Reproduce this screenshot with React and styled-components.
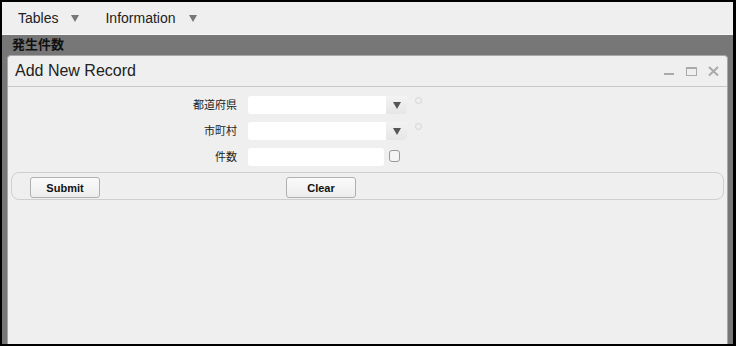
import React from "react";
import styled, { createGlobalStyle } from "styled-components";

const GlobalStyle = createGlobalStyle`
  html, body {
    margin: 0;
    padding: 0;
    background: #000;
  }
  * {
    box-sizing: border-box;
  }
`;

const Frame = styled.div`
  width: 736px;
  height: 346px;
  border: 2px solid #000;
  border-right-width: 3px;
  display: flex;
  flex-direction: column;
  background: #777;
  font-family: "Liberation Sans", "Noto Sans CJK JP", sans-serif;
  overflow: hidden;
`;

const MenuBar = styled.div`
  height: 33px;
  flex: none;
  display: flex;
  align-items: center;
  padding-left: 16px;
  gap: 26px;
  background: #efefef;
  border-bottom: 1px solid #f8f8f8;
`;

const MenuItem = styled.div`
  display: flex;
  align-items: center;
  gap: 13px;
  font-size: 14px;
  color: #222;
`;

const MenuArrow = styled.span`
  width: 0;
  height: 0;
  border-left: 4px solid transparent;
  border-right: 4px solid transparent;
  border-top: 7px solid #777;
  margin-top: 1px;
`;

const Backdrop = styled.div`
  flex: 1;
  display: flex;
  flex-direction: column;
  background: #777;
  min-height: 0;
`;

const SectionTitle = styled.div`
  height: 20px;
  flex: none;
  padding-left: 10px;
  font-size: 13px;
  font-weight: bold;
  line-height: 20px;
  color: #111;
`;

const Dialog = styled.div`
  flex: 1;
  margin: 0 5px;
  display: flex;
  flex-direction: column;
  background: #efefef;
  border: 1px solid #a8a8a8;
  border-bottom: none;
  border-radius: 4px 4px 0 0;
`;

const TitleBar = styled.div`
  height: 31px;
  flex: none;
  display: flex;
  align-items: center;
  padding: 0 8px 0 7px;
  border-bottom: 1px solid #c8c8c8;
`;

const Title = styled.div`
  flex: 1;
  font-size: 16px;
  color: #222;
`;

const Controls = styled.div`
  display: flex;
  align-items: center;
  gap: 11px;
`;

const ControlIcon = styled.svg`
  display: block;
  width: 11px;
  height: 11px;
`;

const Form = styled.div`
  display: grid;
  grid-template-columns: 229px auto;
  column-gap: 11px;
  row-gap: 8px;
  padding-top: 9px;
  align-items: start;
`;

const Label = styled.label`
  text-align: right;
  font-size: 11px;
  line-height: 18px;
  color: #222;
`;

const Field = styled.div`
  display: flex;
  align-items: flex-start;
`;

const SelectBox = styled.div`
  width: 159px;
  height: 18px;
  display: flex;
  background: #fff;
  border-radius: 3px;
  overflow: hidden;
`;

const SelectValue = styled.div`
  flex: 1;
`;

const SelectButton = styled.div`
  width: 21px;
  display: flex;
  align-items: center;
  justify-content: center;
  background: linear-gradient(#f3f3f3, #e6e6e6);
  &::after {
    content: "";
    border-left: 4px solid transparent;
    border-right: 4px solid transparent;
    border-top: 7px solid #555;
  }
`;

const Hint = styled.span`
  width: 7px;
  height: 7px;
  margin: 1px 0 0 8px;
  border: 1px solid #d4d4d4;
  border-radius: 50%;
`;

const TextInput = styled.input`
  width: 136px;
  height: 18px;
  border: none;
  border-radius: 3px;
  background: #fff;
  padding: 0 3px;
  font-size: 11px;
  outline: none;
`;

const CheckBox = styled.span`
  width: 11px;
  height: 12px;
  margin: 2px 0 0 5px;
  border: 1px solid #999;
  border-radius: 3px;
  background: #f4f4f4;
`;

const ButtonBar = styled.div`
  margin: 6px 3px 0;
  height: 28px;
  display: flex;
  align-items: flex-start;
  padding: 4px 0 0 18px;
  border: 1px solid #cfcfcf;
  border-radius: 8px;
`;

const Button = styled.button`
  width: 70px;
  height: 21px;
  margin-right: ${(p) => p.$gap || 0}px;
  padding: 0;
  border: 1px solid #b0b0b0;
  border-radius: 3px;
  background: linear-gradient(#fafafa, #ededed);
  font-family: "Liberation Sans", sans-serif;
  font-size: 11px;
  font-weight: bold;
  color: #111;
`;

const Select = () => (
  <SelectBox>
    <SelectValue />
    <SelectButton />
  </SelectBox>
);

export default function App() {
  return (
    <>
      <GlobalStyle />
      <Frame>
        <MenuBar>
          <MenuItem>
            Tables <MenuArrow />
          </MenuItem>
          <MenuItem>
            Information <MenuArrow />
          </MenuItem>
        </MenuBar>
        <Backdrop>
          <SectionTitle>発生件数</SectionTitle>
          <Dialog>
            <TitleBar>
              <Title>Add New Record</Title>
              <Controls>
                <ControlIcon viewBox="0 0 11 11">
                  <rect x="0" y="7" width="10" height="2" fill="#aaa" />
                </ControlIcon>
                <ControlIcon viewBox="0 0 11 11">
                  <rect x="0.5" y="1.5" width="10" height="8" fill="none" stroke="#aaa" />
                  <rect x="0" y="1" width="11" height="2" fill="#aaa" />
                </ControlIcon>
                <ControlIcon viewBox="0 0 11 11">
                  <path d="M1 1 L10 9.5 M10 1 L1 9.5" stroke="#aaa" strokeWidth="2" />
                </ControlIcon>
              </Controls>
            </TitleBar>
            <Form>
              <Label>都道府県</Label>
              <Field>
                <Select />
                <Hint />
              </Field>
              <Label>市町村</Label>
              <Field>
                <Select />
                <Hint />
              </Field>
              <Label>件数</Label>
              <Field>
                <TextInput type="text" />
                <CheckBox />
              </Field>
            </Form>
            <ButtonBar>
              <Button $gap={186}>Submit</Button>
              <Button>Clear</Button>
            </ButtonBar>
          </Dialog>
        </Backdrop>
      </Frame>
    </>
  );
}
